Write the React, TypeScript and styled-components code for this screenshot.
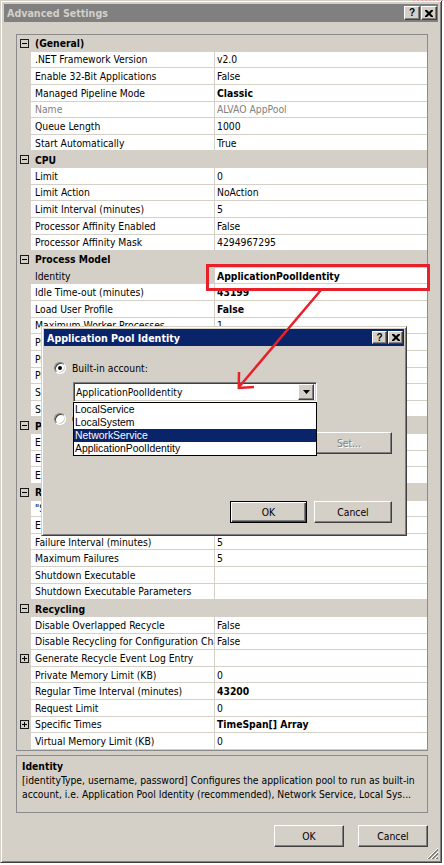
import React from 'react';
import styled, { createGlobalStyle, css } from 'styled-components';

const FACE = '#d4d0c8';
const NAVY = '#0a246a';
const UI_FONT = `"DejaVu Sans Condensed", "DejaVu Sans", sans-serif`;
const LIST_FONT = `"Liberation Sans", Arial, sans-serif`;

const Global = createGlobalStyle`
  html, body { margin: 0; padding: 0; background: #fff; }
  body { width: 444px; height: 865px; overflow: hidden; }
  * { box-sizing: border-box; }
`;

const Page = styled.div`
  position: relative;
  width: 444px;
  height: 865px;
  font-family: ${UI_FONT};
  font-stretch: condensed;
  font-size: 10.3px;
  color: #000;
`;

const raised = css`
  border: 1px solid;
  border-color: #fff #404040 #404040 #fff;
  box-shadow: inset -1px -1px #808080, inset 1px 1px ${FACE};
`;

const sunken = css`
  border: 1px solid;
  border-color: #808080 #fff #fff #808080;
  box-shadow: inset 1px 1px #404040, inset -1px -1px ${FACE};
`;

const WindowFrame = styled.div<{ $w: number; $h: number; $pad: number }>`
  display: flex;
  flex-direction: column;
  width: ${(p) => p.$w}px;
  height: ${(p) => p.$h}px;
  background: ${FACE};
  border: 1px solid;
  border-color: ${FACE} #404040 #404040 ${FACE};
  box-shadow: inset 1px 1px #fff, inset -1px -1px #808080;
  padding: ${(p) => p.$pad}px;
`;

const MainWindow = styled(WindowFrame)`
  position: relative;
`;

const DialogWindow = styled(WindowFrame)`
  position: absolute;
  left: 41px;
  top: 326px;
  z-index: 2;
`;

const TitleBar = styled.div<{ $active?: boolean; $h: number }>`
  display: flex;
  align-items: center;
  height: ${(p) => p.$h}px;
  flex: none;
  padding: 0 1px 0 3px;
  background: ${(p) => (p.$active ? NAVY : '#808080')};
  color: ${(p) => (p.$active ? '#fff' : FACE)};
  font-weight: bold;
  font-size: 10.6px;
  white-space: nowrap;
`;

const TitleText = styled.span`
  flex: 1;
`;

const TitleButtons = styled.div`
  display: flex;
  gap: 1px;
`;

const CaptionButton = styled.div<{ $w: number; $h: number }>`
  ${raised};
  width: ${(p) => p.$w}px;
  height: ${(p) => p.$h}px;
  background: ${FACE};
  display: flex;
  align-items: center;
  justify-content: center;
  color: #000;
  font-family: ${LIST_FONT};
  font-weight: bold;
  font-size: 10px;
  line-height: 1;
`;

const MainBody = styled.div`
  display: flex;
  flex-direction: column;
  padding: 12px 10px 0 12px;
`;

const GridBox = styled.div`
  height: 717px;
  border: 1px solid #8a8a8a;
  background: #fff;
  overflow: hidden;
`;

const ROW_H = 'calc(715px / 43)';

const PropRow = styled.div`
  display: grid;
  grid-template-columns: 14px 183px 1fr;
  height: ${ROW_H};
`;

const MarginCell = styled.div`
  background: ${FACE};
  display: flex;
  align-items: center;
  justify-content: center;
  padding-left: 1px;
`;

const NameCell = styled.div<{ $selected?: boolean; $disabled?: boolean }>`
  display: flex;
  align-items: center;
  padding-left: 4px;
  overflow: hidden;
  white-space: nowrap;
  border-bottom: 1px solid ${FACE};
  background: ${(p) => (p.$selected ? FACE : '#fff')};
  color: ${(p) => (p.$disabled ? '#808080' : '#000')};
`;

const ValueCell = styled.div<{ $bold?: boolean; $disabled?: boolean }>`
  display: flex;
  align-items: center;
  padding-left: 2px;
  overflow: hidden;
  white-space: nowrap;
  border-left: 1px solid ${FACE};
  border-bottom: 1px solid ${FACE};
  font-weight: ${(p) => (p.$bold ? 'bold' : 'normal')};
  color: ${(p) => (p.$disabled ? '#808080' : '#000')};
`;

const CategoryRow = styled.div`
  display: grid;
  grid-template-columns: 14px 1fr;
  height: ${ROW_H};
  background: ${FACE};
  font-weight: bold;
`;

const CategoryLabel = styled.div`
  display: flex;
  align-items: center;
  padding-left: 4px;
  white-space: nowrap;
`;

const Description = styled.div`
  margin-top: 4px;
  height: 58px;
  border: 1px solid #8a8a8a;
  padding: 3px 5px 0 5px;
  line-height: 14px;
  overflow: hidden;
`;

const DescTitle = styled.div`
  font-weight: bold;
`;

const DescLine = styled.div`
  white-space: nowrap;
  overflow: hidden;
`;

const ButtonRow = styled.div<{ $gap: number }>`
  display: flex;
  justify-content: flex-end;
  gap: ${(p) => p.$gap}px;
`;

const MainButtons = styled(ButtonRow)`
  margin-top: 12px;
`;

const PushButton = styled.div<{ $w: number; $default?: boolean; $disabled?: boolean }>`
  ${raised};
  width: ${(p) => p.$w}px;
  height: 22px;
  flex: none;
  display: flex;
  align-items: center;
  justify-content: center;
  background: ${FACE};
  color: ${(p) => (p.$disabled ? '#808080' : '#000')};
  text-shadow: ${(p) => (p.$disabled ? '1px 1px #fff' : 'none')};
  ${(p) =>
    p.$default &&
    css`
      border-color: #000;
      box-shadow: inset 1px 1px #fff, inset -1px -1px #404040, inset -2px -2px #808080;
    `}
`;

const Grip = styled.svg`
  position: absolute;
  right: 2px;
  bottom: 2px;
`;

const DialogBody = styled.div`
  flex: 1;
  display: flex;
  flex-direction: column;
  padding: 15px 12px 10px 10px;
`;

const RadioRow = styled.div<{ $mt: number }>`
  display: flex;
  align-items: center;
  gap: 6px;
  height: 14px;
  margin-top: ${(p) => p.$mt}px;
  white-space: nowrap;
`;

const Radio = styled.div<{ $checked?: boolean }>`
  width: 12px;
  height: 12px;
  border-radius: 50%;
  flex: none;
  background: #fff;
  border: 1px solid;
  border-color: #808080 #fff #fff #808080;
  box-shadow: inset 1px 1px #404040, inset -1px -1px ${FACE};
  display: flex;
  align-items: center;
  justify-content: center;
  &::after {
    content: '';
    width: 4px;
    height: 4px;
    border-radius: 50%;
    background: ${(p) => (p.$checked ? '#000' : 'transparent')};
  }
`;

const ComboWrap = styled.div`
  position: relative;
  margin: 7px 0 0 19px;
  width: 244px;
  z-index: 3;
`;

const Combo = styled.div`
  ${sunken};
  height: 20px;
  background: #fff;
  display: flex;
  align-items: center;
  padding: 0 2px 0 2px;
  white-space: nowrap;
`;

const ComboText = styled.span`
  flex: 1;
`;

const DropButton = styled.div`
  ${raised};
  width: 16px;
  height: 16px;
  background: ${FACE};
  display: flex;
  align-items: center;
  justify-content: center;
`;

const DropList = styled.div`
  position: absolute;
  left: 0;
  top: 100%;
  width: 100%;
  border: 1px solid #000;
  background: #fff;
  font-family: ${LIST_FONT};
  font-stretch: normal;
  font-size: 10.4px;
`;

const ListItem = styled.div<{ $selected?: boolean }>`
  height: 13px;
  line-height: 13px;
  padding-left: 1px;
  white-space: nowrap;
  background: ${(p) => (p.$selected ? NAVY : '#fff')};
  color: ${(p) => (p.$selected ? '#fff' : '#000')};
`;

const FieldRow = styled.div`
  display: flex;
  gap: 6px;
  margin: 6px 0 0 19px;
`;

const TextField = styled.div`
  ${sunken};
  flex: 1;
  height: 20px;
  background: ${FACE};
`;

const DialogButtons = styled(ButtonRow)`
  margin-top: auto;
`;

const Annotation = styled.svg`
  position: absolute;
  left: 0;
  top: 0;
  z-index: 5;
  pointer-events: none;
`;

type PropItem = {
  name: string;
  value?: string;
  bold?: boolean;
  disabled?: boolean;
  selected?: boolean;
  expandable?: boolean;
};

type Group = { title: string; rows: PropItem[] };

const groups: Group[] = [
  {
    title: '(General)',
    rows: [
      { name: '.NET Framework Version', value: 'v2.0' },
      { name: 'Enable 32-Bit Applications', value: 'False' },
      { name: 'Managed Pipeline Mode', value: 'Classic', bold: true },
      { name: 'Name', value: 'ALVAO AppPool', disabled: true },
      { name: 'Queue Length', value: '1000' },
      { name: 'Start Automatically', value: 'True' },
    ],
  },
  {
    title: 'CPU',
    rows: [
      { name: 'Limit', value: '0' },
      { name: 'Limit Action', value: 'NoAction' },
      { name: 'Limit Interval (minutes)', value: '5' },
      { name: 'Processor Affinity Enabled', value: 'False' },
      { name: 'Processor Affinity Mask', value: '4294967295' },
    ],
  },
  {
    title: 'Process Model',
    rows: [
      { name: 'Identity', value: 'ApplicationPoolIdentity', bold: true, selected: true },
      { name: 'Idle Time-out (minutes)', value: '43199', bold: true },
      { name: 'Load User Profile', value: 'False', bold: true },
      { name: 'Maximum Worker Processes', value: '1' },
      { name: 'Ping Enabled', value: 'True' },
      { name: 'Ping Maximum Response Time (seconds)', value: '90' },
      { name: 'Ping Period (seconds)', value: '30' },
      { name: 'Shutdown Time Limit (seconds)', value: '90' },
      { name: 'Startup Time Limit (seconds)', value: '90' },
    ],
  },
  {
    title: 'Process Orphaning',
    rows: [
      { name: 'Enabled', value: 'False' },
      { name: 'Executable', value: '' },
      { name: 'Executable Parameters', value: '' },
    ],
  },
  {
    title: 'Rapid-Fail Protection',
    rows: [
      { name: '"Service Unavailable" Response Type', value: 'HttpLevel' },
      { name: 'Enabled', value: 'True' },
      { name: 'Failure Interval (minutes)', value: '5' },
      { name: 'Maximum Failures', value: '5' },
      { name: 'Shutdown Executable', value: '' },
      { name: 'Shutdown Executable Parameters', value: '' },
    ],
  },
  {
    title: 'Recycling',
    rows: [
      { name: 'Disable Overlapped Recycle', value: 'False' },
      { name: 'Disable Recycling for Configuration Changes', value: 'False' },
      { name: 'Generate Recycle Event Log Entry', value: '', expandable: true },
      { name: 'Private Memory Limit (KB)', value: '0' },
      { name: 'Regular Time Interval (minutes)', value: '43200', bold: true },
      { name: 'Request Limit', value: '0' },
      { name: 'Specific Times', value: 'TimeSpan[] Array', bold: true, expandable: true },
      { name: 'Virtual Memory Limit (KB)', value: '0' },
    ],
  },
];

const ToggleGlyph = ({ plus }: { plus?: boolean }) => (
  <svg width="9" height="9" viewBox="0 0 9 9">
    <rect x="0.5" y="0.5" width="8" height="8" fill="none" stroke="#1a1a1a" />
    <line x1="2" y1="4.5" x2="7" y2="4.5" stroke="#000" />
    {plus && <line x1="4.5" y1="2" x2="4.5" y2="7" stroke="#000" />}
  </svg>
);

const CloseGlyph = () => (
  <svg width="8" height="7" viewBox="0 0 8 7">
    <path d="M0 0h2l2 2 2-2h2v1L5.5 3.5 8 6v1H6L4 5 2 7H0V6l2.5-2.5L0 1z" fill="#000" />
  </svg>
);

const DownArrow = () => (
  <svg width="7" height="4" viewBox="0 0 7 4">
    <path d="M0 0h7L3.5 4z" fill="#000" />
  </svg>
);

const CaptionButtons = ({ w, h }: { w: number; h: number }) => (
  <TitleButtons>
    <CaptionButton $w={w} $h={h}>?</CaptionButton>
    <CaptionButton $w={w} $h={h}>
      <CloseGlyph />
    </CaptionButton>
  </TitleButtons>
);

export default function App() {
  return (
    <Page>
      <Global />
      <MainWindow $w={442} $h={863} $pad={3}>
        <TitleBar $h={18}>
          <TitleText>Advanced Settings</TitleText>
          <CaptionButtons w={16} h={14} />
        </TitleBar>
        <MainBody>
          <GridBox>
            {groups.map((g) => (
              <React.Fragment key={g.title}>
                <CategoryRow>
                  <MarginCell>
                    <ToggleGlyph />
                  </MarginCell>
                  <CategoryLabel>{g.title}</CategoryLabel>
                </CategoryRow>
                {g.rows.map((r, i) => (
                  <PropRow key={g.title + i}>
                    <MarginCell>{r.expandable && <ToggleGlyph plus />}</MarginCell>
                    <NameCell $selected={r.selected} $disabled={r.disabled}>
                      {r.name}
                    </NameCell>
                    <ValueCell $bold={r.bold} $disabled={r.disabled}>
                      {r.value}
                    </ValueCell>
                  </PropRow>
                ))}
              </React.Fragment>
            ))}
          </GridBox>
          <Description>
            <DescTitle>Identity</DescTitle>
            <DescLine>
              [identityType, username, password] Configures the application pool to run as built-in
            </DescLine>
            <DescLine>
              account, i.e. Application Pool Identity (recommended), Network Service, Local Sys...
            </DescLine>
          </Description>
          <MainButtons $gap={14}>
            <PushButton $w={70}>OK</PushButton>
            <PushButton $w={70}>Cancel</PushButton>
          </MainButtons>
        </MainBody>
        <Grip width="13" height="13" viewBox="0 0 13 13">
          {[0, 4, 8].map((o) => (
            <g key={o}>
              <line x1={12} y1={1 + o} x2={1 + o} y2={12} stroke="#fff" />
              <line x1={12} y1={2 + o} x2={2 + o} y2={12} stroke="#808080" />
              <line x1={12} y1={3 + o} x2={3 + o} y2={12} stroke="#808080" />
            </g>
          ))}
        </Grip>
      </MainWindow>

      <DialogWindow $w={366} $h={210} $pad={2}>
        <TitleBar $active $h={17}>
          <TitleText>Application Pool Identity</TitleText>
          <CaptionButtons w={15} h={13} />
        </TitleBar>
        <DialogBody>
          <RadioRow $mt={0}>
            <Radio $checked />
            <span>Built-in account:</span>
          </RadioRow>
          <ComboWrap>
            <Combo>
              <ComboText>ApplicationPoolIdentity</ComboText>
              <DropButton>
                <DownArrow />
              </DropButton>
            </Combo>
            <DropList>
              <ListItem>LocalService</ListItem>
              <ListItem>LocalSystem</ListItem>
              <ListItem $selected>NetworkService</ListItem>
              <ListItem>ApplicationPoolIdentity</ListItem>
            </DropList>
          </ComboWrap>
          <RadioRow $mt={10}>
            <Radio />
            <span>Custom account:</span>
          </RadioRow>
          <FieldRow>
            <TextField />
            <PushButton $w={86} $disabled>
              Set...
            </PushButton>
          </FieldRow>
          <DialogButtons $gap={7}>
            <PushButton $w={77} $default>
              OK
            </PushButton>
            <PushButton $w={78}>Cancel</PushButton>
          </DialogButtons>
        </DialogBody>
      </DialogWindow>

      <Annotation width="444" height="865" viewBox="0 0 444 865">
        <line x1="413" y1="0.5" x2="444" y2="0.5" stroke="#f4a3aa" strokeDasharray="2 2" />
        <rect x="207.5" y="265.5" width="221" height="24" fill="none" stroke="#e8202a" strokeWidth="3" />
        <line x1="321" y1="290" x2="239" y2="387" stroke="#e8202a" strokeWidth="2.5" />
        <polyline points="239,372 238.8,388 254,387" fill="none" stroke="#e8202a" strokeWidth="2.5" />
      </Annotation>
    </Page>
  );
}
